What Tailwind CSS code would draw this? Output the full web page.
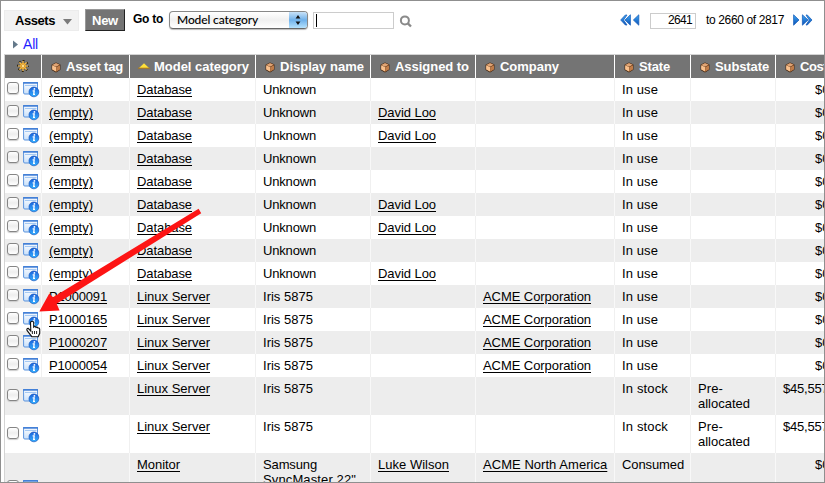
<!DOCTYPE html>
<html lang="en">
<head>
<meta charset="utf-8">
<title>Assets</title>
<script src="https://cdn.jsdelivr.net/npm/@tailwindcss/browser@4"></script>
</head>
<body class="bg-white overflow-hidden">
<svg class="absolute w-0 h-0">
  <defs>
    <linearGradient id="gb" x1="0" y1="0" x2="0" y2="1"><stop offset="0" stop-color="#3fa9f5"/><stop offset="1" stop-color="#0a4fb5"/></linearGradient>
    <linearGradient id="gi" x1="0" y1="0" x2="0" y2="1"><stop offset="0" stop-color="#1a62dc"/><stop offset="1" stop-color="#35b0ff"/></linearGradient>
    <linearGradient id="gw" x1="0" y1="0" x2="0" y2="1"><stop offset="0" stop-color="#ffffff"/><stop offset="1" stop-color="#c9e0fa"/></linearGradient>
    <symbol id="cube" viewBox="0 0 10 11">
      <path d="M5 .6 9.4 2.6V7.7L5 10.4.6 7.9V2.8Z" fill="#3a1d08"/>
      <path d="M5 1 8.9 2.8 5 4.8 1.1 3Z" fill="#e0a474"/>
      <path d="M1.1 3.2 5.2 5V9.8L1.1 7.6Z" fill="#f9c08c"/>
      <path d="M5.2 5.1 9 3.2V7.5L5.2 9.7Z" fill="#c07c48"/>
    </symbol>
    <symbol id="info" viewBox="0 0 17 16">
      <path d="M.6.6H14.5V12H1.9Q.6 12 .6 11Z" fill="url(#gw)" stroke="#5b93dd"/>
      <path d="M.1.1H15V1.7H.1Z" fill="#3f7dd6"/>
      <path d="M2 3.4H13.5" stroke="#9cc3f2"/>
      <circle cx="10.9" cy="9.9" r="4.9" fill="url(#gi)" stroke="#1656bd" stroke-width=".7"/>
      <path d="M9.6 8.9H11.2L10.7 12.3H12" fill="none" stroke="#fff" stroke-width="1.3"/>
      <circle cx="11.4" cy="6.9" r=".9" fill="#fff"/>
    </symbol>
  </defs>
</svg>
<div class="relative w-[825px] h-[483px] border border-[#8f8f8f] overflow-hidden text-black text-[13px] leading-[15px] font-['Liberation_Sans',Arial,sans-serif]">
  <div class="flex items-start h-[34px] pl-[3px] pt-[8px] whitespace-nowrap">
    <div class="flex items-center shrink-0 w-[75px] h-[21px] mt-px bg-[#f2f2f2] border border-[#ececec] pl-[10px] font-bold text-[13px]">
      <span class="w-[40px]" data-w="40" data-f="bold 13px Liberation Sans">Assets</span>
      <svg class="ml-[8px] mt-[2px]" width="9" height="6"><path d="M0 0H9L4.5 5.5Z" fill="#7b7b7b"/></svg>
    </div>
    <div class="flex items-center justify-center shrink-0 ml-[6px] w-[40px] h-[22px] bg-[#747474] border border-[#999] border-r-[#222] border-b-[#222] text-white font-bold"><span data-w="26" data-f="bold 13px Liberation Sans">New</span></div>
    <span class="ml-[8px] mt-[3px] w-[30px] font-bold text-[12px]" data-w="30" data-f="bold 12px Liberation Sans">Go to</span>
    <div class="flex justify-between items-stretch shrink-0 ml-[6px] mt-[2px] w-[139px] h-[18px] rounded-[4px] border border-[#888] border-b-[#666] overflow-hidden bg-linear-to-b from-white via-[#f0f0f0] to-white shadow-[0_1px_1px_#bbb]">
      <span class="pl-[7px] text-[12px] leading-[16px] font-['Lato',sans-serif] font-medium" data-w="81" data-f="500 12px Lato">Model category</span>
      <span class="flex items-center justify-center w-[18px] bg-linear-to-b from-[#c8e2f8] via-[#6fb1ea] to-[#b5e2fd]"><svg width="6" height="12"><path d="M3 1 5.4 4.5H.6ZM3 11 .6 7.5H5.4Z" fill="#111"/></svg></span>
    </div>
    <div class="shrink-0 ml-[5px] mt-[3px] w-[81px] h-[17px] border border-[#ccc] pl-[2px] pt-[1px]"><div class="w-px h-[13px] bg-black"></div></div>
    <svg class="ml-[5px] mt-[6px]" width="14" height="14"><circle cx="5.9" cy="5.4" r="4" fill="none" stroke="#8a8a8a" stroke-width="2"/><path d="M8.8 8.4 12 11.5" stroke="#8a8a8a" stroke-width="2.4"/></svg>
    <div class="flex items-center ml-auto mr-[11px] mt-[2px] h-[18px] text-[12px]">
      <svg width="21" height="12"><path d="M5.4 1H7L3.6 6 7 11H5.4L.7 6ZM10.4.8V11.2L5 6Z" fill="url(#gb)" stroke="#1c62bd" stroke-width=".8"/><path d="M18.8.8V11.2L13.4 6Z" fill="url(#gb)" stroke="#1c62bd" stroke-width=".8"/></svg>
      <div class="flex justify-end items-center ml-[9px] mt-[1px] w-[46px] h-[16px] border border-[#ccc] pr-[3px]"><span data-w="24" data-f="12px Liberation Sans">2641</span></div>
      <span class="ml-[10px] w-[78px]" data-w="78" data-f="12px Liberation Sans">to 2660 of 2817</span>
      <svg class="ml-[8px]" width="21" height="12"><path d="M1.6.8V11.2L7 6Z" fill="url(#gb)" stroke="#1c62bd" stroke-width=".8"/><path d="M14 1H15.3L20 6 15.3 11H14L17.2 6ZM10.4.8V11.2L16 6Z" fill="url(#gb)" stroke="#1c62bd" stroke-width=".8"/></svg>
    </div>
  </div>
  <div class="flex items-center h-[19px] pl-[12px] pb-[1px] text-[14px] text-[#1d1dff]"><svg class="mr-[4px]" width="6" height="9"><path d="M0 .5 5 4.5 0 8.5Z" fill="#64798a"/></svg><span data-w="15" data-f="14px Liberation Sans">All</span></div>
  <div class="ml-[3px] h-[429px] overflow-hidden border-t border-l border-[#d4d4d4]">
    <div id="head" class="grid grid-cols-[37px_88px_126px_115px_105px_139px_76px_85px_49px] h-[23px] bg-[#747474] text-white font-bold"></div>
    <div id="rows"></div>
  </div>
  <svg class="absolute left-0 top-0 pointer-events-none" width="823" height="481" viewBox="1 1 823 481">
    <path d="M39.3 311.5 49.3 293.5 53 297.3 198.6 208.7 201.2 213.2 56.6 303.8 59.6 310.4Z" fill="#fd1414"/>
    <path d="M30.5 322.2Q32.4 320.2 33.7 322.2V327Q35 325.8 36 327.4 37.2 326.7 38 328 39.6 327.6 39.7 329.4V333.3L38.2 336.7H31.8L27 330.4Q26.3 328.5 28.2 328.3L30.8 331Z" fill="#fff" stroke="#111" stroke-width="1.1"/>
    <path d="M32.4 331V334M34.5 331V334M36.6 331V334" stroke="#111" stroke-width=".9"/>
  </svg>
</div>
<script>
const heads = [['Asset tag',57],['Model category',95],['Display name',84],['Assigned to',74],['Company',59],['State',31],['Substate',54],['Cost',27]];
const cube = '<svg class="shrink-0 mt-[3px] mr-[5px]" width="10" height="11"><use href="#cube"/></svg>';
const sort = '<svg class="shrink-0 mr-[4px]" width="12" height="6"><path d="M6 .3 11 5H1Z" fill="#ffe13a"/><path d="M0 5.2H12" stroke="#b57c13"/></svg>';
const gear = '<svg width="12" height="12" viewBox="-6 -6 12 12"><circle r="5.3" fill="none" stroke="#2a1c00" stroke-width="1.2" stroke-dasharray="2 2.16" stroke-dashoffset="1"/><circle r="3.4" fill="#3a2703"/><path d="M0-5V5M-5 0H5M-3.6-3.6 3.6 3.6M-3.6 3.6 3.6-3.6" stroke="#ffc04a" stroke-width="1.2"/><circle r="2.7" fill="none" stroke="#efae35" stroke-width="1"/><circle r="1" fill="#ffe7a0"/></svg>';
document.getElementById('head').innerHTML =
  `<div class="flex items-center justify-center border-r border-white pb-[2px]">${gear}</div>` +
  heads.map(([t, w], i) => `<div class="flex items-center ${i === 1 ? 'pl-[8px]' : 'pl-[9px]'} pb-[1px] whitespace-nowrap overflow-hidden border-r border-white">${i === 1 ? sort : cube}<span data-w="${w}" data-f="bold 13px Liberation Sans">${t}</span></div>`).join('');

const W = {'(empty)':44,'Database':55,'Unknown':53,'David Loo':58,'In use':36,'Linux Server':73,'Iris 5875':50,'ACME Corporation':108,'In stock':46,'Monitor':43,'Luke Wilson':71,'ACME North America':125,'Consumed':62,'P1000091':58,'P1000165':58,'P1000207':58,'P1000054':58,'Samsung':54,'SyncMaster 22"':93,'Pre-':25,'allocated':52,'$45,557.00':63,'$0.00':33};
const data = [];
for (let i = 0; i < 9; i++) data.push(['(empty)','Database','Unknown',[1,2,5,6,8].includes(i) ? 'David Loo' : '','','In use','','$0.00']);
for (const p of ['P1000091','P1000165','P1000207','P1000054']) data.push([p,'Linux Server','Iris 5875','','ACME Corporation','In use','','$0.00']);
for (let i = 0; i < 2; i++) data.push(['','Linux Server','Iris 5875','','','In stock','Pre-|allocated','$45,557.00']);
data.push(['','Monitor','Samsung|SyncMaster 22"','Luke Wilson','ACME North America','Consumed','','$0.00']);
const linked = [0, 1, 3, 4];
document.getElementById('rows').innerHTML = data.map((r, n) => {
  const h = n < 13 ? 'h-[23px]' : n < 15 ? 'h-[38px]' : 'h-[68px]';
  const shaded = n % 2 === 1;
  const line = shaded ? 'border-[#f8f8f8]' : 'border-[#f0f0f0]';
  const first = `<div class="flex items-center pl-[2px] pb-[1px] border-r ${n < 13 ? line : 'border-transparent'}"><span class="w-[12px] h-[12px] -mt-[2px] rounded-[3px] border border-[#858585] bg-linear-to-b from-white via-[#eee] to-white shadow-[0_1px_1px_#ccc]"></span><svg class="ml-[4px] mt-[2px] shrink-0" width="17" height="16"><use href="#info"/></svg></div>`;
  return `<div class="grid grid-cols-[37px_88px_126px_115px_105px_139px_76px_85px_49px] ${h} ${shaded ? 'bg-[#ededed]' : 'bg-white'}">${first}` + r.map((t, i) => {
    const body = t.split('|').filter(Boolean).map(s => `<span data-w="${W[s]}" data-f="13px Liberation Sans" class="${linked.includes(i) ? 'underline underline-offset-2 decoration-1' : ''}">${s}</span>`).join('<br>');
    const pad = i === 7 ? (t.startsWith('$4') ? 'pl-[7px]' : 'pl-[39px]') : 'pl-[7px]';
    return `<div class="pt-[4px] ${pad} whitespace-nowrap overflow-hidden border-r ${line}">${body}</div>`;
  }).join('') + '</div>';
}).join('');

// Even out label widths by adjusting tracking.
const ctx = document.createElement('canvas').getContext('2d');
document.querySelectorAll('[data-w]').forEach(e => {
  ctx.font = e.dataset.f.replace(/px (.*)$/, 'px "$1"');
  const d = (+e.dataset.w - ctx.measureText(e.textContent).width) / e.textContent.length;
  e.style.letterSpacing = d.toFixed(3) + 'px';
});
</script>
</body>
</html>
